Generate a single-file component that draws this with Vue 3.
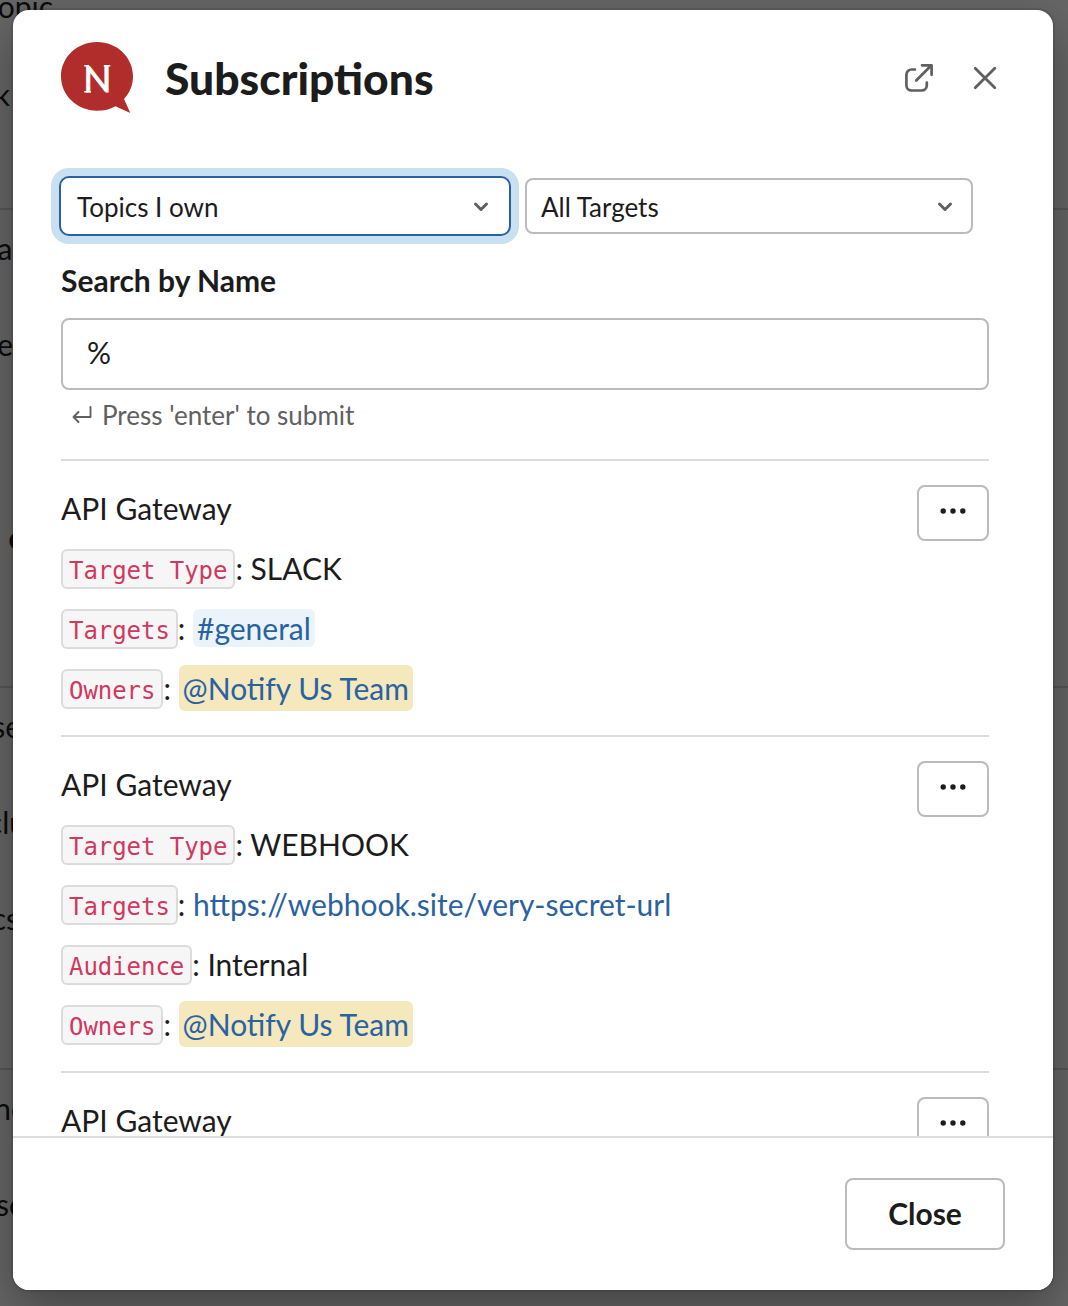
<script setup>
import { ref } from 'vue'

const query = ref('%')

const owners = { label: 'Owners', text: '@Notify Us Team', kind: 'mention' }
const items = [
  {
    name: 'API Gateway',
    fields: [
      { label: 'Target Type', text: 'SLACK', kind: 'plain' },
      { label: 'Targets', text: '#general', kind: 'channel' },
      owners,
    ],
  },
  {
    name: 'API Gateway',
    fields: [
      { label: 'Target Type', text: 'WEBHOOK', kind: 'plain' },
      { label: 'Targets', text: 'https://webhook.site/very-secret-url', kind: 'link' },
      { label: 'Audience', text: 'Internal', kind: 'plain' },
      owners,
    ],
  },
  { name: 'API Gateway', fields: [] },
]

// Message pane behind the dialog: `right` is where each fragment ends
const fragments = [
  { text: 'opic', right: 53, top: -12 },
  { text: 'k', right: 10, top: 76 },
  { text: 'at', right: 23, top: 230 },
  { text: 'e', right: 13, top: 326 },
  { text: 'c', right: 23, top: 519, bold: true },
  { text: 'se', right: 21, top: 708 },
  { text: 'clu', right: 26, top: 804 },
  { text: 'cs', right: 19, top: 900 },
  { text: 'no', right: 28, top: 1090 },
  { text: 'so', right: 26, top: 1186 },
]
const rules = [208, 686, 1068]
</script>

<template>
  <div class="page">
    <div class="backdrop" aria-hidden="true">
      <i v-for="y in rules" :key="y" class="rule" :style="{ top: y + 'px' }"></i>
      <span
        v-for="f in fragments"
        :key="f.top"
        class="fragment"
        :class="{ bold: f.bold }"
        :style="{ top: f.top + 'px', right: 1068 - f.right + 'px' }"
      >{{ f.text }}</span>
    </div>

    <section class="modal" role="dialog">
      <header class="head">
        <svg class="logo" width="72" height="72" viewBox="0 0 72 72">
          <path fill="#b12d2b" d="M36 0C56 0 72 15.300 72 34.300C72 43 68.800 51 63 57L69.300 71L54.500 64.200C49 67.200 43 68.700 36 68.700C16 68.700 0 53.300 0 34.300S16 0 36 0Z" />
          <text class="logo-letter" x="36.300" y="50" text-anchor="middle">N</text>
          <path fill="none" stroke="#fff" stroke-width="1.400" d="M23.200 23.700H28M42.800 23.700H49.300M23.200 49.700H30" />
        </svg>
        <h1>Subscriptions</h1>
        <button class="icon-btn" aria-label="Open in new window">
          <svg width="32" height="32" viewBox="0 0 32 32" fill="none" stroke="#616061" stroke-width="2.700" stroke-linecap="round" stroke-linejoin="round">
            <path d="M12 7.500H8.600A5.200 5.200 0 0 0 3.400 12.700V23.300A5.200 5.200 0 0 0 8.600 28.500H18.600A5.200 5.200 0 0 0 23.800 23.300V20.500" />
            <path d="M13.200 18.500L28.200 3.500M19 3.300H28.600V12.800" />
          </svg>
        </button>
        <button class="icon-btn" aria-label="Close dialog">
          <svg width="32" height="32" viewBox="0 0 32 32" fill="none" stroke="#616061" stroke-width="2.800" stroke-linecap="round">
            <path d="M6.200 6.200L25.800 25.800M25.800 6.200L6.200 25.800" />
          </svg>
        </button>
      </header>

      <div class="body">
        <div class="filters">
          <button class="select focused">
            <span>Topics I own</span>
            <svg width="16" height="12" viewBox="0 0 16 12" fill="none" stroke="#616061" stroke-width="3" stroke-linecap="round" stroke-linejoin="round"><path d="M2.500 3L8 8.500L13.500 3" /></svg>
          </button>
          <button class="select">
            <span>All Targets</span>
            <svg width="16" height="12" viewBox="0 0 16 12" fill="none" stroke="#616061" stroke-width="3" stroke-linecap="round" stroke-linejoin="round"><path d="M2.500 3L8 8.500L13.500 3" /></svg>
          </button>
        </div>

        <label class="search-label" for="search">Search by Name</label>
        <input id="search" v-model="query" class="search" type="text" />
        <p class="hint">
          <svg width="22" height="20" viewBox="0 0 22 20" fill="none" stroke="#616061" stroke-width="1.900" stroke-linecap="round" stroke-linejoin="round"><path d="M19.500 2V12H2.500M7.500 7L2.500 12L7.500 17" /></svg>
          <span>Press 'enter' to submit</span>
        </p>

        <article v-for="(item, i) in items" :key="i" class="item">
          <div class="info">
            <div class="row">{{ item.name }}</div>
            <div v-for="f in item.fields" :key="f.label" class="row"><code>{{ f.label }}</code>: <span :class="f.kind">{{ f.text }}</span></div>
          </div>
          <button class="more" aria-label="More actions">
            <svg width="28" height="8" viewBox="0 0 28 8" fill="#1d1c1d"><circle cx="4.200" cy="4" r="2.700" /><circle cx="14" cy="4" r="2.700" /><circle cx="23.800" cy="4" r="2.700" /></svg>
          </button>
        </article>
      </div>

      <footer class="foot">
        <button class="close">Close</button>
      </footer>
    </section>
  </div>
</template>

<style>
body { margin: 0; }
</style>

<style scoped>
* { box-sizing: border-box; }
.page {
  position: relative;
  width: 1068px;
  height: 1306px;
  padding: 10px 15px 16px 13px;
  overflow: hidden;
  background: #666;
  color: #1d1c1d;
  font-family: Lato, sans-serif;
  font-size: 30px;
}
.backdrop { position: absolute; inset: 0; }
.rule {
  position: absolute;
  left: 0;
  right: 0;
  height: 2px;
  background: #575757;
}
.fragment {
  position: absolute;
  line-height: 36px;
  color: #0c0b0c;
  white-space: nowrap;
}
.fragment.bold { font-weight: 700; }
.modal {
  position: relative;
  display: flex;
  flex-direction: column;
  width: 1040px;
  height: 1280px;
  overflow: hidden;
  border-radius: 16px;
  background: #fff;
  box-shadow: 0 0 0 2px rgba(29, 28, 29, 0.13), 0 18px 48px rgba(0, 0, 0, 0.35);
}
button {
  margin: 0;
  padding: 0;
  border: 0;
  background: #fff;
  color: inherit;
  font: inherit;
}
svg { display: block; flex: none; }
.head {
  display: flex;
  align-items: center;
  flex: none;
  height: 136px;
  padding: 0 52px 0 48px;
}
.logo-letter {
  fill: #fff;
  stroke: #fff;
  stroke-width: 0.8px;
  font-size: 37px;
}
h1 {
  flex: 1;
  margin: 0 0 1px 32px;
  font-size: 44.4px;
  font-weight: 900;
  line-height: 56px;
}
.icon-btn + .icon-btn { margin-left: 34px; }
.body {
  flex: 1;
  min-height: 0;
  padding: 30px 64px 0 46px;
  overflow: hidden;
}
.filters {
  display: flex;
  align-items: center;
  gap: 14px;
  height: 60px;
}
.select {
  display: flex;
  align-items: center;
  justify-content: space-between;
  width: 448px;
  height: 56px;
  padding: 2px 18px 0 14px;
  border: 2px solid #bbb;
  border-radius: 8px;
  font-size: 26px;
}
.select.focused {
  width: 452px;
  height: 60px;
  padding: 2px 20px 0 16px;
  border-color: #2a62a1;
  border-radius: 10px;
  box-shadow: 0 0 0 8px #c9e0f0;
}
.search-label {
  display: block;
  margin: 26px 0 19px 2px;
  font-weight: 700;
  line-height: 37px;
}
.search {
  display: block;
  width: 928px;
  height: 72px;
  margin-left: 2px;
  padding: 0 24px 4px;
  border: 2px solid #bbb;
  border-radius: 8px;
  outline: 0;
  background: #fff;
  color: inherit;
  font: inherit;
}
.hint {
  display: flex;
  align-items: center;
  gap: 9px;
  height: 50px;
  margin: 0 0 19px 12px;
  color: #616061;
  font-size: 26px;
}
.item {
  display: flex;
  justify-content: space-between;
  margin-left: 2px;
  padding: 16px 0 17px;
  border-top: 2px solid #ddd;
}
.info { padding-top: 1px; }
.row {
  height: 60px;
  line-height: 60px;
  white-space: nowrap;
}
code {
  display: inline-block;
  height: 40px;
  padding: 4px 6px 0;
  border: 2px solid #dcdcdc;
  border-radius: 6px;
  background: #f6f6f6;
  color: #d0395f;
  font-family: "DejaVu Sans Mono", monospace;
  font-size: 24px;
  line-height: 32px;
  letter-spacing: -0.05px;
  vertical-align: 1px;
}
.channel,
.mention {
  display: inline-block;
  padding: 0 4px;
  border-radius: 6px;
  background: #ebf4fa;
  color: #2a62a1;
  line-height: 38px;
}
.mention {
  background: #f5e8bd;
  line-height: 46px;
}
.link { color: #2a62a1; }
.more {
  display: flex;
  align-items: center;
  justify-content: center;
  width: 72px;
  height: 56px;
  margin-top: 8px;
  padding-bottom: 4px;
  border: 2px solid #bbb;
  border-radius: 8px;
}
.foot {
  display: flex;
  flex: none;
  align-items: center;
  justify-content: flex-end;
  height: 154px;
  padding-right: 48px;
  border-top: 2px solid #ddd;
  background: #fff;
}
.close {
  width: 160px;
  height: 72px;
  padding-bottom: 2px;
  border: 2px solid #bbb;
  border-radius: 8px;
  font-weight: 700;
}
</style>
